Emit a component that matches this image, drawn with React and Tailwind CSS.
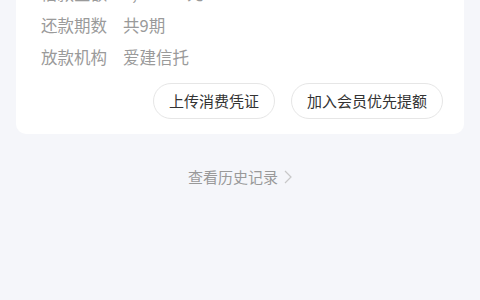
export default function App() {
  const rows = [
    { label: "借款金额", value: "3,000.00元" },
    { label: "还款期数", value: "共9期" },
    { label: "放款机构", value: "爱建信托" },
  ];

  return (
    <div
      className="w-[480px] h-[300px] overflow-hidden bg-[#f5f6fa]"
      style={{ fontFamily: '"Noto Sans CJK SC", "Noto Sans", sans-serif' }}
    >
      <div className="mx-4 -mt-[41px] rounded-[10px] bg-white pt-[18px] pb-[15px] pl-[25px] pr-[21px]">
        {rows.map((r) => (
          <div key={r.label} className="flex h-[32px] items-center text-[16.5px] text-[#9a9a9a]">
            <span className="w-[82px]">{r.label}</span>
            <span>{r.value}</span>
          </div>
        ))}
        <div className="mt-[10px] flex justify-end gap-4">
          <button className="h-[36px] rounded-full border border-[#e6e6e6] px-[15px] text-[15px] text-[#333]">
            上传消费凭证
          </button>
          <button className="h-[36px] rounded-full border border-[#e6e6e6] px-[15px] text-[15px] text-[#333]">
            加入会员优先提额
          </button>
        </div>
      </div>
      <div className="mt-[33px] flex items-center justify-center gap-[6px] text-[15px] leading-[20px] text-[#999]">
        <span>查看历史记录</span>
        <svg width="8" height="14" viewBox="0 0 8 14" fill="none">
          <path d="M1 1l6 6-6 6" stroke="#c8c8c8" strokeWidth="1.2" />
        </svg>
      </div>
    </div>
  );
}
